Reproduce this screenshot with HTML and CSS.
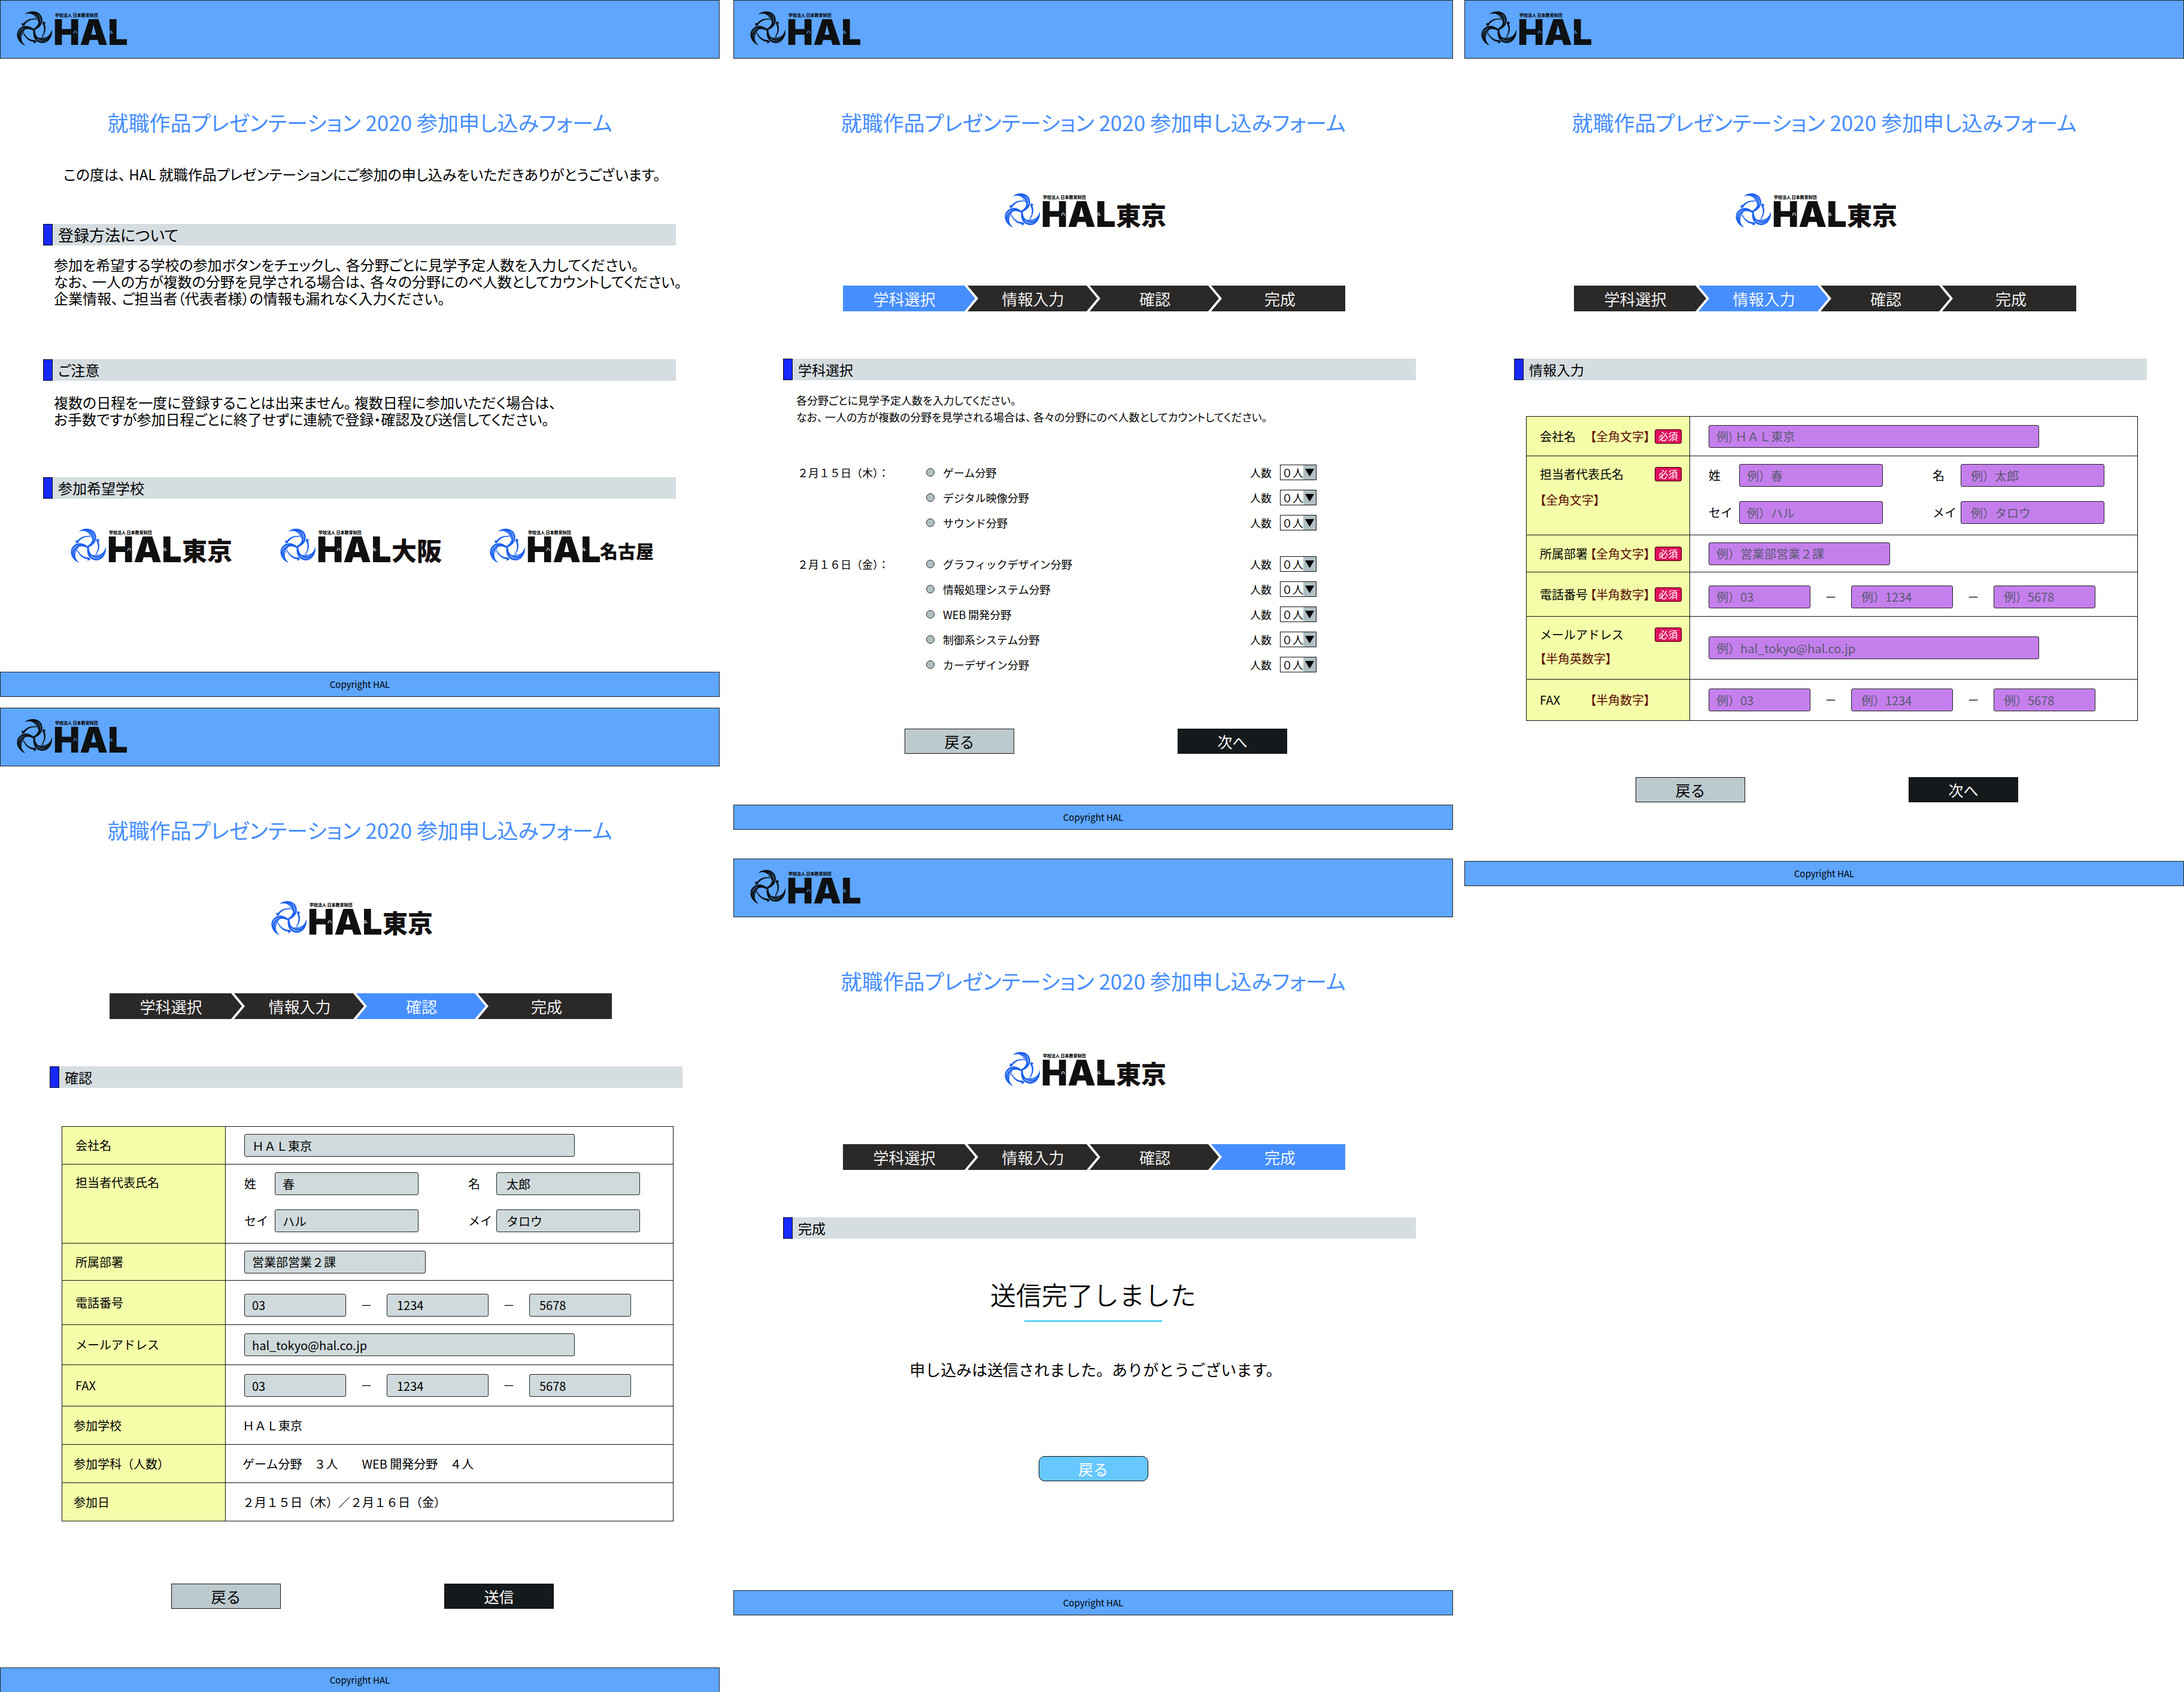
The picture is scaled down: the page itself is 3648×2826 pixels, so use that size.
FILE: index.html
```html
<!DOCTYPE html>
<html lang="ja">
<head>
<meta charset="utf-8">
<meta name="viewport" content="width=device-width, initial-scale=1">
<title>就職作品プレゼンテーション 2020 参加申し込みフォーム</title>
<link rel="stylesheet" href="styles.css">
</head>
<body>
<svg class="sprite" aria-hidden="true">
  <symbol id="blade" viewBox="0 0 198 198" overflow="visible">
    <path fill-rule="evenodd" d="M52 24C70 6 108 2 128 22C145 40 146 72 122 90C112 98 106 101 98 101L90 99C108 90 119 78 121 64C122 56 110 50 104 36C94 20 74 17 52 24ZM92 16C112 24 122 36 126 62C124 40 114 22 92 16ZM112 17C128 30 132 50 129 74C136 50 130 28 112 17ZM98 26C110 38 116 46 121 58C118 44 110 32 98 26Z"/>
    <path d="M38 82L38 66L46 70C58 52 82 42 108 46L110 50C84 48 64 58 52 76L50 80Z"/>
  </symbol>
  <symbol id="mark" viewBox="0 0 58 58" overflow="visible">
    <g transform="translate(-4 -5) scale(.3333)">
      <g><use href="#blade" width="198" height="198"/></g>
      <g transform="rotate(120 98 101)"><use href="#blade" width="198" height="198"/></g>
      <g transform="rotate(240 98 101)"><use href="#blade" width="198" height="198"/></g>
    </g>
  </symbol>
</svg>

<main class="board">
  <div class="column column-first">

    <section class="screen">
      <header class="screen-header"><svg class="header-logo" viewBox="0 0 188 58" role="img" aria-label="HAL"><use class="logo-mark" href="#mark" width="58" height="58"/><text class="logo-owner" x="64" y="7">学校法人 日本教育財団</text><text class="logo-word" x="61" y="54">HAL</text><text class="logo-kana" x="94" y="35">ハ</text><text class="logo-kana" x="154" y="35">ル</text></svg></header>
      <div class="content content-intro">
        <h1 class="title">就職作品プレゼンテーション 2020 参加申し込みフォーム</h1>
        <p class="lead">この度は、 HAL 就職作品プレゼンテーションにご参加の申し込みをいただきありがとうございます。</p>
        <h2 class="bar bar-large">登録方法について</h2>
        <p class="body-text">参加を希望する学校の参加ボタンをチェックし、 各分野ごとに見学予定人数を入力してください。<br>なお、 一人の方が複数の分野を見学される場合は、 各々の分野にのべ人数としてカウントしてください。<br>企業情報、 ご担当者（代表者様）の情報も漏れなく入力ください。</p>
        <h2 class="bar bar-notice">ご注意</h2>
        <p class="body-text body-notice">複数の日程を一度に登録することは出来ません。 複数日程に参加いただく場合は、<br>お手数ですが参加日程ごとに終了せずに連続で登録・確認及び送信してください。</p>
        <h2 class="bar bar-schools">参加希望学校</h2>
        <nav class="schools">
          <a href="#select"><svg class="school-logo" viewBox="0 0 268 58" role="img" aria-label="HAL東京"><use class="logo-mark" href="#mark" width="58" height="58"/><text class="logo-owner" x="64" y="7">学校法人 日本教育財団</text><text class="logo-word" x="61" y="54">HAL</text><text class="logo-kana" x="94" y="35">ハ</text><text class="logo-kana" x="154" y="35">ル</text><text class="logo-city" x="186" y="51">東京</text></svg></a>
          <a href="#select"><svg class="school-logo" viewBox="0 0 268 58" role="img" aria-label="HAL大阪"><use class="logo-mark" href="#mark" width="58" height="58"/><text class="logo-owner" x="64" y="7">学校法人 日本教育財団</text><text class="logo-word" x="61" y="54">HAL</text><text class="logo-kana" x="94" y="35">ハ</text><text class="logo-kana" x="154" y="35">ル</text><text class="logo-city" x="186" y="51">大阪</text></svg></a>
          <a href="#select"><svg class="school-logo" viewBox="0 0 268 58" role="img" aria-label="HAL名古屋"><use class="logo-mark" href="#mark" width="58" height="58"/><text class="logo-owner" x="64" y="7">学校法人 日本教育財団</text><text class="logo-word" x="61" y="54">HAL</text><text class="logo-kana" x="94" y="35">ハ</text><text class="logo-kana" x="154" y="35">ル</text><text class="logo-city logo-city-long" x="184" y="47">名古屋</text></svg></a>
        </nav>
      </div>
      <footer class="screen-footer">Copyright HAL</footer>
    </section>

    <section class="screen">
      <header class="screen-header"><svg class="header-logo" viewBox="0 0 188 58" role="img" aria-label="HAL"><use class="logo-mark" href="#mark" width="58" height="58"/><text class="logo-owner" x="64" y="7">学校法人 日本教育財団</text><text class="logo-word" x="61" y="54">HAL</text><text class="logo-kana" x="94" y="35">ハ</text><text class="logo-kana" x="154" y="35">ル</text></svg></header>
      <div class="content content-confirm">
        <h1 class="title">就職作品プレゼンテーション 2020 参加申し込みフォーム</h1>
        <div class="selected-school"><svg class="school-logo" viewBox="0 0 268 58" role="img" aria-label="HAL東京"><use class="logo-mark" href="#mark" width="58" height="58"/><text class="logo-owner" x="64" y="7">学校法人 日本教育財団</text><text class="logo-word" x="61" y="54">HAL</text><text class="logo-kana" x="94" y="35">ハ</text><text class="logo-kana" x="154" y="35">ル</text><text class="logo-city" x="186" y="51">東京</text></svg></div>
        <ol class="steps"><li>学科選択</li><li>情報入力</li><li class="current" aria-current="step">確認</li><li>完成</li></ol>
        <h2 class="bar bar-step">確認</h2>
        <table class="form-table confirm-table">
          <tr class="row-company"><th scope="row"><label for="c-company">会社名</label></th><td><input class="field field-long" id="c-company" value="ＨＡＬ東京" readonly></td></tr>
          <tr class="row-person"><th scope="row"><div class="label-stack">担当者代表氏名</div></th><td>
            <div class="names">
              <label for="c-sei">姓</label><input class="field" id="c-sei" value="春" readonly><label for="c-mei">名</label><input class="field field-inset" id="c-mei" value="太郎" readonly>
              <label for="c-sei-kana">セイ</label><input class="field" id="c-sei-kana" value="ハル" readonly><label for="c-mei-kana">メイ</label><input class="field field-inset" id="c-mei-kana" value="タロウ" readonly>
            </div></td></tr>
          <tr class="row-dept"><th scope="row"><label for="c-dept">所属部署</label></th><td><input class="field field-medium" id="c-dept" value="営業部営業２課" readonly></td></tr>
          <tr class="row-tel"><th scope="row"><label for="c-tel">電話番号</label></th><td><div class="number"><input class="field field-short" id="c-tel" value="03" readonly><span>－</span><input class="field field-short field-inset" aria-label="市内局番" value="1234" readonly><span>－</span><input class="field field-short field-inset" aria-label="加入者番号" value="5678" readonly></div></td></tr>
          <tr class="row-mail"><th scope="row"><label for="c-mail">メールアドレス</label></th><td><input class="field field-long" id="c-mail" value="hal_tokyo@hal.co.jp" readonly></td></tr>
          <tr class="row-fax"><th scope="row"><label for="c-fax">FAX</label></th><td><div class="number"><input class="field field-short" id="c-fax" value="03" readonly><span>－</span><input class="field field-short field-inset" aria-label="FAX 市内局番" value="1234" readonly><span>－</span><input class="field field-short field-inset" aria-label="FAX 加入者番号" value="5678" readonly></div></td></tr>
          <tr class="row-plain"><th scope="row">参加学校</th><td>ＨＡＬ東京</td></tr>
          <tr class="row-plain"><th scope="row">参加学科（人数）</th><td>ゲーム分野　３人　　WEB 開発分野　４人</td></tr>
          <tr class="row-plain"><th scope="row">参加日</th><td>２月１５日（木）／２月１６日（金）</td></tr>
        </table>
        <div class="actions"><button class="button button-back" type="button">戻る</button><button class="button button-next" type="submit">送信</button></div>
      </div>
      <footer class="screen-footer">Copyright HAL</footer>
    </section>
  </div>

  <div class="column column-second">
    <section class="screen" id="select">
      <header class="screen-header"><svg class="header-logo" viewBox="0 0 188 58" role="img" aria-label="HAL"><use class="logo-mark" href="#mark" width="58" height="58"/><text class="logo-owner" x="64" y="7">学校法人 日本教育財団</text><text class="logo-word" x="61" y="54">HAL</text><text class="logo-kana" x="94" y="35">ハ</text><text class="logo-kana" x="154" y="35">ル</text></svg></header>
      <form class="content content-select">
        <h1 class="title">就職作品プレゼンテーション 2020 参加申し込みフォーム</h1>
        <div class="selected-school"><svg class="school-logo" viewBox="0 0 268 58" role="img" aria-label="HAL東京"><use class="logo-mark" href="#mark" width="58" height="58"/><text class="logo-owner" x="64" y="7">学校法人 日本教育財団</text><text class="logo-word" x="61" y="54">HAL</text><text class="logo-kana" x="94" y="35">ハ</text><text class="logo-kana" x="154" y="35">ル</text><text class="logo-city" x="186" y="51">東京</text></svg></div>
        <ol class="steps"><li class="current" aria-current="step">学科選択</li><li>情報入力</li><li>確認</li><li>完成</li></ol>
        <h2 class="bar bar-step">学科選択</h2>
        <p class="note">各分野ごとに見学予定人数を入力してください。<br>なお、 一人の方が複数の分野を見学される場合は、 各々の分野にのべ人数としてカウントしてください。</p>
        <div class="days">
          <div class="day" role="group" aria-labelledby="day-15">
            <p class="date" id="day-15">２月１５日（木）：</p>
            <div class="courses">
              <div class="course"><input type="radio" name="c1" id="c1"><label for="c1">ゲーム分野</label><label for="n1">人数</label><select id="n1"><option>０人</option><option>１人</option></select></div>
              <div class="course"><input type="radio" name="c2" id="c2"><label for="c2">デジタル映像分野</label><label for="n2">人数</label><select id="n2"><option>０人</option><option>１人</option></select></div>
              <div class="course"><input type="radio" name="c3" id="c3"><label for="c3">サウンド分野</label><label for="n3">人数</label><select id="n3"><option>０人</option><option>１人</option></select></div>
            </div>
          </div>
          <div class="day" role="group" aria-labelledby="day-16">
            <p class="date" id="day-16">２月１６日（金）：</p>
            <div class="courses">
              <div class="course"><input type="radio" name="c4" id="c4"><label for="c4">グラフィックデザイン分野</label><label for="n4">人数</label><select id="n4"><option>０人</option><option>１人</option></select></div>
              <div class="course"><input type="radio" name="c5" id="c5"><label for="c5">情報処理システム分野</label><label for="n5">人数</label><select id="n5"><option>０人</option><option>１人</option></select></div>
              <div class="course"><input type="radio" name="c6" id="c6"><label for="c6">WEB 開発分野</label><label for="n6">人数</label><select id="n6"><option>０人</option><option>１人</option></select></div>
              <div class="course"><input type="radio" name="c7" id="c7"><label for="c7">制御系システム分野</label><label for="n7">人数</label><select id="n7"><option>０人</option><option>１人</option></select></div>
              <div class="course"><input type="radio" name="c8" id="c8"><label for="c8">カーデザイン分野</label><label for="n8">人数</label><select id="n8"><option>０人</option><option>１人</option></select></div>
            </div>
          </div>
        </div>
        <div class="actions"><button class="button button-back" type="button">戻る</button><button class="button button-next" type="submit">次へ</button></div>
      </form>
      <footer class="screen-footer">Copyright HAL</footer>
    </section>

    <section class="screen">
      <header class="screen-header"><svg class="header-logo" viewBox="0 0 188 58" role="img" aria-label="HAL"><use class="logo-mark" href="#mark" width="58" height="58"/><text class="logo-owner" x="64" y="7">学校法人 日本教育財団</text><text class="logo-word" x="61" y="54">HAL</text><text class="logo-kana" x="94" y="35">ハ</text><text class="logo-kana" x="154" y="35">ル</text></svg></header>
      <div class="content content-done">
        <h1 class="title">就職作品プレゼンテーション 2020 参加申し込みフォーム</h1>
        <div class="selected-school"><svg class="school-logo" viewBox="0 0 268 58" role="img" aria-label="HAL東京"><use class="logo-mark" href="#mark" width="58" height="58"/><text class="logo-owner" x="64" y="7">学校法人 日本教育財団</text><text class="logo-word" x="61" y="54">HAL</text><text class="logo-kana" x="94" y="35">ハ</text><text class="logo-kana" x="154" y="35">ル</text><text class="logo-city" x="186" y="51">東京</text></svg></div>
        <ol class="steps"><li>学科選択</li><li>情報入力</li><li>確認</li><li class="current" aria-current="step">完成</li></ol>
        <h2 class="bar bar-step">完成</h2>
        <div class="done">
          <p class="done-title">送信完了しました</p>
          <p class="done-text">申し込みは送信されました。ありがとうございます。</p>
          <button class="button button-return" type="button">戻る</button>
        </div>
      </div>
      <footer class="screen-footer">Copyright HAL</footer>
    </section>
  </div>

  <div class="column">
    <section class="screen">
      <header class="screen-header"><svg class="header-logo" viewBox="0 0 188 58" role="img" aria-label="HAL"><use class="logo-mark" href="#mark" width="58" height="58"/><text class="logo-owner" x="64" y="7">学校法人 日本教育財団</text><text class="logo-word" x="61" y="54">HAL</text><text class="logo-kana" x="94" y="35">ハ</text><text class="logo-kana" x="154" y="35">ル</text></svg></header>
      <form class="content content-input">
        <h1 class="title">就職作品プレゼンテーション 2020 参加申し込みフォーム</h1>
        <div class="selected-school"><svg class="school-logo" viewBox="0 0 268 58" role="img" aria-label="HAL東京"><use class="logo-mark" href="#mark" width="58" height="58"/><text class="logo-owner" x="64" y="7">学校法人 日本教育財団</text><text class="logo-word" x="61" y="54">HAL</text><text class="logo-kana" x="94" y="35">ハ</text><text class="logo-kana" x="154" y="35">ル</text><text class="logo-city" x="186" y="51">東京</text></svg></div>
        <ol class="steps"><li>学科選択</li><li class="current" aria-current="step">情報入力</li><li>確認</li><li>完成</li></ol>
        <h2 class="bar bar-step">情報入力</h2>
        <table class="form-table entry-table">
          <tr class="row-company"><th scope="row"><div class="label-line"><label for="company">会社名</label><span class="hint">【全角文字】</span><span class="badge">必須</span></div></th><td><input class="field field-long" id="company" placeholder="例) ＨＡＬ東京"></td></tr>
          <tr class="row-person"><th scope="row"><div class="label-stack"><div class="label-line"><label for="sei">担当者代表氏名</label><span class="badge">必須</span></div><span class="hint">【全角文字】</span></div></th><td>
            <div class="names">
              <label for="sei">姓</label><input class="field" id="sei" placeholder="例）春"><label for="mei">名</label><input class="field field-inset" id="mei" placeholder="例）太郎">
              <label for="sei-kana">セイ</label><input class="field" id="sei-kana" placeholder="例）ハル"><label for="mei-kana">メイ</label><input class="field field-inset" id="mei-kana" placeholder="例）タロウ">
            </div></td></tr>
          <tr class="row-dept"><th scope="row"><div class="label-line"><label for="dept">所属部署</label><span class="hint">【全角文字】</span><span class="badge">必須</span></div></th><td><input class="field field-medium" id="dept" placeholder="例）営業部営業２課"></td></tr>
          <tr class="row-tel"><th scope="row"><div class="label-line"><label for="tel">電話番号</label><span class="hint">【半角数字】</span><span class="badge">必須</span></div></th><td><div class="number"><input class="field field-short" id="tel" placeholder="例）03"><span>－</span><input class="field field-short field-inset" aria-label="市内局番" placeholder="例）1234"><span>－</span><input class="field field-short field-inset" aria-label="加入者番号" placeholder="例）5678"></div></td></tr>
          <tr class="row-mail"><th scope="row"><div class="label-stack"><div class="label-line"><label for="mail">メールアドレス</label><span class="badge">必須</span></div><span class="hint">【半角英数字】</span></div></th><td><input class="field field-long" id="mail" placeholder="例）hal_tokyo@hal.co.jp"></td></tr>
          <tr class="row-fax"><th scope="row"><div class="label-line"><label for="fax">FAX</label><span class="hint">【半角数字】</span></div></th><td><div class="number"><input class="field field-short" id="fax" placeholder="例）03"><span>－</span><input class="field field-short field-inset" aria-label="FAX 市内局番" placeholder="例）1234"><span>－</span><input class="field field-short field-inset" aria-label="FAX 加入者番号" placeholder="例）5678"></div></td></tr>
        </table>
        <div class="actions"><button class="button button-back" type="button">戻る</button><button class="button button-next" type="submit">次へ</button></div>
      </form>
      <footer class="screen-footer">Copyright HAL</footer>
    </section>
  </div>
</main>
</body>
</html>
```
FILE: styles.css
```css
:root {
  --header: #5ea6ff;
  --accent: #468eff;
  --ink: #000;
  --bar: #d6dde0;
  --label: #f4fea8;
}

*, *::before, *::after { box-sizing: border-box; }

body {
  margin: 0;
  background: #fff;
  color: var(--ink);
  font-family: "Noto Sans CJK JP", "Noto Sans", sans-serif;
  font-size: 20px;
  line-height: 28px;
}

h1, h2, p, ol { margin: 0; padding: 0; font-weight: 400; }

input, select, button { font: inherit; color: inherit; }

/* Board of screens */
.board {
  display: grid;
  grid-template-columns: repeat(3, minmax(0, 1fr));
  align-items: start;
  column-gap: 21px;
}
.column { display: flex; flex-direction: column; }
.column-first { gap: 18px; }
.column-second { gap: 48px; margin: 0 -2px 0 2px; }

.screen-header {
  display: flex;
  align-items: flex-start;
  height: 98px;
  padding: 20px 27px;
  border: 1px solid #222;
  background: var(--header);
}
.screen-footer {
  display: flex;
  align-items: center;
  justify-content: center;
  height: 42px;
  border: 1px solid #222;
  background: var(--header);
  font-size: 15px;
}
.content { padding: 82px 62px 0 83px; }
.content-intro { padding: 82px 73px 181px 72px; }
.content-select { padding-bottom: 85px; }
.content-confirm { padding-bottom: 98px; }
.content-input { padding-bottom: 98px; }
.content-done { padding-bottom: 182px; }

.title {
  margin: 0 -62px 0 -83px;
  color: var(--accent);
  font-size: 35px;
  line-height: 48px;
  text-align: center;
  font-feature-settings: "palt";
}
.content-intro .title { margin: 0 -73px 0 -72px; }

/* Logo */
.sprite { position: absolute; width: 0; height: 0; }
.header-logo { width: 188px; height: 58px; --mark: #0a1012; --cut: var(--header); overflow: visible; }
.school-logo { display: block; width: 268px; height: 58px; --mark: #1a60f0; --cut: #fff; overflow: visible; }
.logo-mark { fill: var(--mark); }
.logo-owner { font-size: 7px; font-weight: 900; fill: #0e1011; }
.logo-word { font-family: Inter, sans-serif; font-size: 59px; font-weight: 900; fill: #0e1011; }
.logo-kana { font-size: 7px; font-weight: 700; fill: var(--cut); }
.logo-city { font-size: 42px; font-weight: 900; fill: #131010; }
.logo-city-long { font-size: 30px; }
.selected-school { display: flex; justify-content: center; margin-top: 97px; padding-right: 49px; }

/* Intro */
.lead {
  margin: 49px 0 69px;
  padding-left: 34px;
  font-size: 24px;
  white-space: nowrap;
  font-feature-settings: "palt";
}
.bar {
  display: flex;
  align-items: center;
  height: 36px;
  gap: 9px;
  background: var(--bar);
  font-size: 24px;
  font-feature-settings: "palt";
}
.bar::before {
  content: "";
  align-self: stretch;
  width: 16px;
  border: 1px solid #111;
  background: #1727ff;
}
.bar-large { font-size: 26px; }
.bar-notice { margin-top: 88px; }
.bar-schools { margin-top: 83px; }
.bar-step { margin-top: 79px; font-size: 23px; }
.body-text {
  margin: 18px -20px 0 0;
  padding-left: 18px;
  font-size: 24px;
  white-space: nowrap;
  font-feature-settings: "palt";
}
.body-notice { margin-top: 22px; }
.schools { display: flex; gap: 82px; margin-top: 52px; padding-left: 46px; margin-bottom: -2px; }

/* Progress steps */
.steps {
  display: grid;
  grid-template-columns: 208fr 204fr 203fr 224fr;
  width: 839px;
  max-width: 100%;
  margin: 94px 0 0 100px;
  list-style: none;
}
.steps li {
  display: flex;
  align-items: center;
  justify-content: center;
  height: 43px;
  margin-right: -13px;
  padding-left: 2px;
  background: #2b2928;
  color: #fff;
  font-size: 26px;
  font-weight: 350;
  clip-path: polygon(0 0, calc(100% - 18px) 0, 100% 50%, calc(100% - 18px) 100%, 0 100%, 18px 50%);
}
.steps li:first-child { padding: 0 16px 0 0; clip-path: polygon(0 0, calc(100% - 18px) 0, 100% 50%, calc(100% - 18px) 100%, 0 100%); }
.steps li:last-child { margin-right: 0; padding-left: 6px; clip-path: polygon(0 0, 100% 0, 100% 100%, 0 100%, 18px 50%); }
.steps .current { background: var(--accent); }

/* Course selection */
.note {
  margin-top: 19px;
  padding-left: 22px;
  font-size: 18px;
  white-space: nowrap;
  font-feature-settings: "palt";
}
.days { display: grid; gap: 27px; margin-top: 58px; padding: 0 166px 0 24px; font-size: 18px; }
.day { display: grid; grid-template-columns: 215px 1fr; }
.date { line-height: 42px; white-space: nowrap; }
.course {
  display: grid;
  grid-template-columns: 14px 1fr auto 61px;
  column-gap: 14px;
  align-items: center;
  height: 42px;
}
.course input {
  appearance: none;
  width: 14px;
  height: 14px;
  margin: 0;
  border: 1px solid #222;
  border-radius: 50%;
  background: #b1c1c3;
}
.course select {
  appearance: none;
  width: 61px;
  height: 26px;
  padding: 0 0 0 2px;
  border: 1px solid #111;
  border-radius: 0;
  background:
    url("data:image/svg+xml,%3Csvg xmlns='http://www.w3.org/2000/svg' width='21' height='24'%3E%3Cpath d='M0 0H21V24H0Z' fill='%23b0bfc2'/%3E%3Cpath d='M3 6H18L11 18H10Z'/%3E%3C/svg%3E") right center no-repeat #fff;
  line-height: 24px;
}

/* Buttons */
.actions { display: flex; justify-content: center; gap: 273px; margin-top: 86px; padding-right: 12px; }
.content-input .actions { margin-top: 94px; }
.content-confirm .actions { margin-top: 104px; }
.button {
  width: 183px;
  height: 42px;
  padding: 0;
  border: 1px solid #111;
  font-size: 25px;
  line-height: 36px;
}
.button-back { background: #bccace; }
.button-next { background: #14191c; color: #fff; }
.button-return { border-radius: 10px; background: #66c8ff; color: #fff; }

/* Form tables */
.form-table {
  width: 1022px;
  max-width: 100%;
  margin: 60px 0 0 20px;
  border-collapse: collapse;
  table-layout: fixed;
}
.confirm-table { margin-top: 64px; }
.form-table th, .form-table td { padding: 0; border: 1px solid #111; text-align: left; font-weight: 400; }
.form-table th { width: 273px; padding-left: 22px; background: var(--label); }
.form-table td { padding-left: 31px; }
.form-table .row-plain th { padding-left: 19px; }
.form-table .row-plain td { padding-left: 28px; }
.form-table .row-person th, .form-table .row-person td { vertical-align: top; }
.entry-table .row-mail th { vertical-align: top; }
.row-company { height: 66px; }
.row-person { height: 132px; }
.row-dept { height: 62px; }
.row-tel { height: 74px; }
.row-mail { height: 105px; }
.row-fax { height: 69px; }
.row-plain { height: 64px; }
.confirm-table .row-company { height: 63px; }
.confirm-table .row-mail { height: 67px; }
.label-line { display: grid; grid-template-columns: 84px 1fr auto; align-items: center; padding-right: 13px; }
.label-stack { display: grid; gap: 15px; padding-top: 16px; }
.label-stack .label-line { grid-template-columns: 1fr auto; }
.row-mail .label-stack { gap: 12px; }
.hint { color: #5a0b00; white-space: nowrap; font-feature-settings: "palt"; }
.badge {
  width: 45px;
  height: 24px;
  border: 1px solid #300;
  border-radius: 3px;
  background: #de105c;
  color: #fff;
  font-size: 16px;
  line-height: 20px;
  text-align: center;
}
.field {
  display: block;
  width: 240px;
  height: 38px;
  padding: 0 12px;
  border: 1px solid #222;
  border-radius: 3px;
  background: #c57fed;
}
.field::placeholder { color: #585a70; opacity: 1; }
.confirm-table .field { background: #d0dadc; }
.field-long { width: 552px; }
.field-medium { width: 303px; }
.field-short { width: 170px; }
.field-inset { padding-left: 16px; }
.names { display: grid; grid-template-columns: 51px 240px 83px 47px 240px; row-gap: 24px; align-items: center; padding-top: 13px; }
.names label:nth-of-type(even) { grid-column: 4; }
.number { display: flex; }
.number span { width: 68px; line-height: 38px; text-align: center; }
.row-tel .number { padding-top: 8px; }

/* Completion */
.done { display: grid; justify-items: center; margin: 0 -62px 0 -83px; padding-top: 60px; }
.done-title { font-size: 43px; font-weight: 350; line-height: 64px; padding-bottom: 10px; }
.done-title::after {
  content: "";
  display: block;
  width: 230px;
  height: 3px;
  margin: 12px auto 0;
  background: #5bd3f4;
}
.done-text { margin-top: 51px; padding-left: 8px; font-size: 26px; line-height: 36px; }
.done .button { margin-top: 127px; }
```
